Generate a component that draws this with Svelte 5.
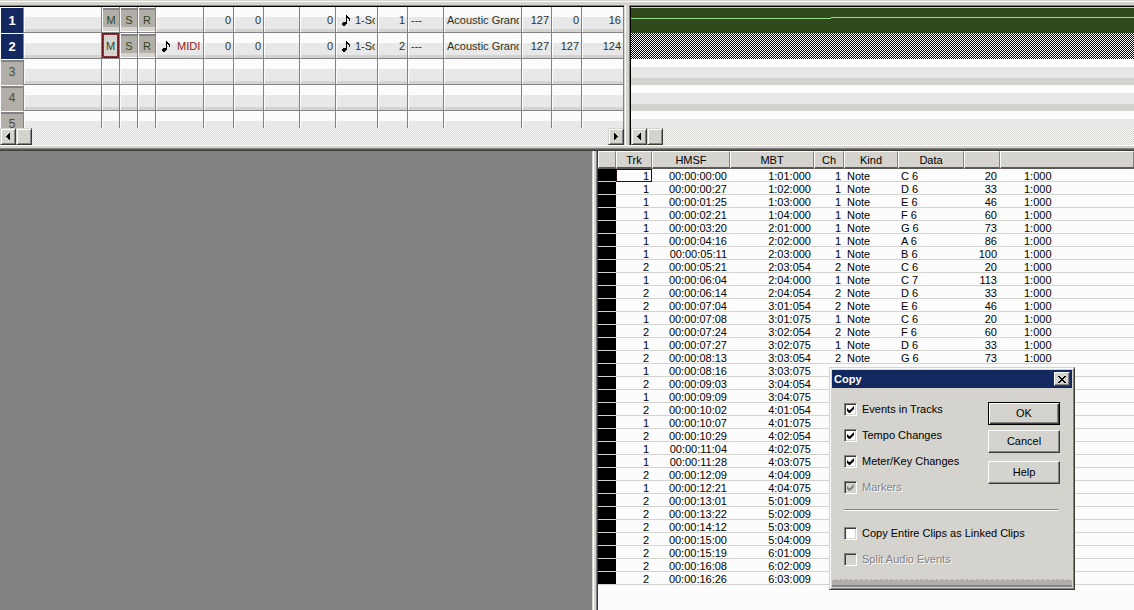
<script>
  const tracks = [
    { no: 1, kind: '', port: '1-Sound', ch: 1, bank: '---', patch: 'Acoustic Grand', vol: 127, pan: 0, size: 16 },
    { no: 2, kind: 'MIDI', port: '1-Sound', ch: 2, bank: '---', patch: 'Acoustic Grand', vol: 127, pan: 127, size: 124 },
    { no: 3 },
    { no: 4 },
    { no: 5 }
  ];

  const trackCols = [24, 78, 18, 18, 18, 48, 30, 30, 36, 36, 42, 30, 36, 78, 30, 30, 42];

  const headers = [
    { name: '', width: 18 },
    { name: 'Trk', width: 36 },
    { name: 'HMSF', width: 78 },
    { name: 'MBT', width: 84 },
    { name: 'Ch', width: 30 },
    { name: 'Kind', width: 54 },
    { name: 'Data', width: 66 },
    { name: '', width: 36 },
    { name: '' }
  ];

  // track, time, position, pitch, velocity
  const events = [
    [1, '00:00:00:00', '1:01:000', 'C 6', 20],
    [1, '00:00:00:27', '1:02:000', 'D 6', 33],
    [1, '00:00:01:25', '1:03:000', 'E 6', 46],
    [1, '00:00:02:21', '1:04:000', 'F 6', 60],
    [1, '00:00:03:20', '2:01:000', 'G 6', 73],
    [1, '00:00:04:16', '2:02:000', 'A 6', 86],
    [1, '00:00:05:11', '2:03:000', 'B 6', 100],
    [2, '00:00:05:21', '2:03:054', 'C 6', 20],
    [1, '00:00:06:04', '2:04:000', 'C 7', 113],
    [2, '00:00:06:14', '2:04:054', 'D 6', 33],
    [2, '00:00:07:04', '3:01:054', 'E 6', 46],
    [1, '00:00:07:08', '3:01:075', 'C 6', 20],
    [2, '00:00:07:24', '3:02:054', 'F 6', 60],
    [1, '00:00:07:27', '3:02:075', 'D 6', 33],
    [2, '00:00:08:13', '3:03:054', 'G 6', 73],
    [1, '00:00:08:16', '3:03:075', 'E 6', 46],
    [2, '00:00:09:03', '3:04:054', 'A 6', 86],
    [1, '00:00:09:09', '3:04:075', 'F 6', 60],
    [2, '00:00:10:02', '4:01:054', 'B 6', 100],
    [1, '00:00:10:07', '4:01:075', 'G 6', 73],
    [2, '00:00:10:29', '4:02:054', 'C 7', 113],
    [1, '00:00:11:04', '4:02:075', 'A 6', 86],
    [1, '00:00:11:28', '4:03:075', 'B 6', 100],
    [2, '00:00:12:09', '4:04:009', 'C 6', 20],
    [1, '00:00:12:21', '4:04:075', 'C 7', 113],
    [2, '00:00:13:01', '5:01:009', 'D 6', 33],
    [2, '00:00:13:22', '5:02:009', 'E 6', 46],
    [2, '00:00:14:12', '5:03:009', 'F 6', 60],
    [2, '00:00:15:00', '5:04:009', 'G 6', 73],
    [2, '00:00:15:19', '6:01:009', 'A 6', 86],
    [2, '00:00:16:08', '6:02:009', 'B 6', 100],
    [2, '00:00:16:26', '6:03:009', 'C 7', 113]
  ];

  let options = $state([
    { label: 'Events in Tracks', checked: true },
    { label: 'Tempo Changes', checked: true },
    { label: 'Meter/Key Changes', checked: true },
    { label: 'Markers', checked: true, disabled: true }
  ]);

  let clipOptions = $state([
    { label: 'Copy Entire Clips as Linked Clips', checked: false },
    { label: 'Split Audio Events', checked: false, disabled: true }
  ]);

  let open = $state(true);
  const close = () => (open = false);
</script>

{#snippet note()}
  <svg class="note" width="9" height="11" viewBox="0 0 9 11" shape-rendering="crispEdges" aria-hidden="true">
    <path d="M4 0h1v1h1v1h1v1h1v3h-1v-2h-1v-1h-1v6h-1v1h-1v1h-2v-1h-1v-2h1v-1h3z" />
  </svg>
{/snippet}

{#snippet arrow(dir)}
  <button type="button" class="scroll-btn" aria-label="Scroll {dir}">
    <svg width="4" height="7" viewBox="0 0 4 7" shape-rendering="crispEdges" aria-hidden="true">
      <path d={dir === 'left' ? 'M3 0h1v7h-1v-1h-1v-1h-1v-1h-1v-1h1v-1h1v-1h1z' : 'M0 0h1v1h1v1h1v1h1v1h-1v1h-1v1h-1v1h-1z'} />
    </svg>
  </button>
{/snippet}

{#snippet checkbox(opt)}
  <label class="check" class:disabled={opt.disabled}>
    <input type="checkbox" bind:checked={opt.checked} disabled={opt.disabled} />
    {opt.label}
  </label>
{/snippet}

<div class="window">
  <div class="topbar"></div>

  <div class="upper">
    <section class="tracks">
      <div class="viewport">
        <table class="track-table">
          <colgroup>
            {#each trackCols as w}
              <col style="width: {w}px" />
            {/each}
          </colgroup>
          <tbody>
            {#each tracks as t}
              <tr>
                <th class:selected={t.no <= 2}>{t.no}</th>
                <td></td>
                {#each ['M', 'S', 'R'] as b}
                  <td class="tool">
                    {#if t.patch}
                      <button type="button" class:focused={t.no === 2 && b === 'M'}>{b}</button>
                    {/if}
                  </td>
                {/each}
                <td>
                  {#if t.kind}
                    <div class="source">{@render note()}<span>{t.kind}</span></div>
                  {/if}
                </td>
                <td class="num">{t.patch ? 0 : ''}</td>
                <td class="num">{t.patch ? 0 : ''}</td>
                <td></td>
                <td class="num">{t.patch ? 0 : ''}</td>
                <td>
                  {#if t.port}
                    <div class="port">{@render note()}<span>{t.port}</span></div>
                  {/if}
                </td>
                <td class="num">{t.ch ?? ''}</td>
                <td class="text">{t.bank ?? ''}</td>
                <td class="text"><div class="clip">{t.patch ?? ''}</div></td>
                <td class="num">{t.vol ?? ''}</td>
                <td class="num">{t.pan ?? ''}</td>
                <td class="num">{t.size ?? ''}</td>
              </tr>
            {/each}
          </tbody>
        </table>
      </div>
      <div class="scrollbar">
        {@render arrow('left')}
        <div class="thumb"></div>
        <div class="space"></div>
        {@render arrow('right')}
      </div>
    </section>

    <div class="splitter"></div>

    <section class="clips">
      <div class="viewport">
        <div class="clip-row green">
          <svg width="100%" height="24" shape-rendering="crispEdges" aria-hidden="true">
            <rect x="0" y="10" width="200" height="1" />
            <rect x="200" y="9" width="100%" height="1" />
          </svg>
        </div>
        <div class="clip-row dither"></div>
        <div class="clip-row"></div>
        <div class="clip-row"></div>
        <div class="clip-row"></div>
      </div>
      <div class="scrollbar">
        {@render arrow('left')}
        <div class="thumb"></div>
      </div>
    </section>
  </div>

  <div class="divider"></div>

  <div class="lower">
    <div class="workspace"></div>
    <section class="events">
      <table class="event-table">
        <colgroup>
          {#each headers as h}
            {#if h.width}
              <col style="width: {h.width}px" />
            {:else}
              <col />
            {/if}
          {/each}
        </colgroup>
        <thead>
          <tr>
            {#each headers as h}
              <th>{h.name}</th>
            {/each}
          </tr>
        </thead>
        <tbody>
          {#each events as [trk, hmsf, mbt, pitch, vel], i}
            <tr>
              <td class="marker"></td>
              <td class="num" class:cursor={i === 0}>{trk}</td>
              <td class="num">{hmsf}</td>
              <td class="num">{mbt}</td>
              <td class="num">{trk}</td>
              <td>Note</td>
              <td>{pitch}</td>
              <td class="num">{vel}</td>
              <td class="duration">1:000</td>
            </tr>
          {/each}
        </tbody>
      </table>
    </section>
  </div>

  {#if open}
    <div class="dialog" role="dialog" aria-labelledby="dialog-title">
      <div class="titlebar">
        <span id="dialog-title">Copy</span>
        <button type="button" class="close" aria-label="Close" onclick={close}>
          <svg width="8" height="7" viewBox="0 0 8 7" shape-rendering="crispEdges" aria-hidden="true">
            <path d="M0 0h2v1h1v1h2v-1h1v-1h2v1h-1v1h-1v1h-1v1h1v1h1v1h1v1h-2v-1h-1v-1h-2v1h-1v1h-2v-1h1v-1h1v-1h1v-1h-1v-1h-1v-1h-1z" />
          </svg>
        </button>
      </div>
      <div class="dialog-body">
        <div class="options">
          {#each options as opt}
            {@render checkbox(opt)}
          {/each}
        </div>
        <div class="actions">
          <button type="button" class="default" onclick={close}>OK</button>
          <button type="button" onclick={close}>Cancel</button>
          <button type="button" class="help">Help</button>
        </div>
      </div>
      <hr />
      <div class="options clip-options">
        {#each clipOptions as opt}
          {@render checkbox(opt)}
        {/each}
      </div>
      <div class="grip"></div>
    </div>
  {/if}
</div>

<style>
  :global(body) {
    margin: 0;
    overflow: hidden;
  }

  .window {
    --face: #d4d3ce;
    --light: #fcfcfc;
    --shadow: #848284;
    --dark: #3c3c34;
    --navy: #12285f;
    --tool: #b1afa7;
    display: flex;
    flex-direction: column;
    height: 100vh;
    position: relative;
    background: var(--face);
    color: #000;
    font: 11px/13px 'Liberation Sans', Arial, sans-serif;
  }

  button {
    font: inherit;
    color: inherit;
    padding: 0;
    margin: 0;
    box-sizing: border-box;
  }

  table {
    border-collapse: separate;
    border-spacing: 0;
    table-layout: fixed;
  }

  th,
  td {
    padding: 0;
    box-sizing: border-box;
    white-space: nowrap;
    overflow: hidden;
  }

  .topbar {
    height: 5px;
    flex: none;
    background: linear-gradient(var(--face) 1px, var(--light) 1px 2px, var(--face) 2px);
  }

  .upper {
    display: flex;
    flex: none;
  }

  .tracks,
  .clips {
    border-top: 1px solid var(--shadow);
    box-shadow: inset 0 1px #000;
    padding-top: 1px;
    box-sizing: border-box;
  }

  .tracks {
    width: 624px;
    flex: none;
  }

  .clips {
    flex: 1;
    min-width: 0;
    border-left: 1px solid var(--shadow);
    box-shadow: inset 1px 1px #000;
    padding-left: 1px;
  }

  .splitter {
    width: 5px;
    flex: none;
    background: linear-gradient(90deg, var(--face) 1px, var(--light) 1px 2px, var(--face) 2px);
  }

  .viewport {
    height: 121px;
    overflow: hidden;
  }

  .track-table {
    width: 624px;
    color: #2c3424;
  }

  .track-table tr {
    height: 26px;
  }

  .track-table td {
    height: 26px;
    padding-top: 2px;
    border-right: 1px solid var(--shadow);
    border-bottom: 1px solid var(--shadow);
    box-shadow: inset 1px 0 var(--light);
    background: linear-gradient(var(--light) 10px, #e8e8e8 10px 22px, var(--face) 22px);
  }

  .track-table th {
    height: 26px;
    border-top: 1px solid var(--light);
    border-left: 1px solid var(--light);
    border-right: 1px solid var(--shadow);
    background: linear-gradient(var(--shadow) 2px, var(--tool) 2px);
    font-weight: normal;
    font-size: 12px;
    color: #4c4c48;
  }

  .track-table th.selected {
    background: var(--navy);
    color: #fff;
    font-weight: bold;
    font-size: 13px;
  }

  .track-table .num {
    text-align: right;
    padding-right: 2px;
  }

  .track-table .text {
    padding-left: 3px;
  }

  .clip {
    overflow: hidden;
    margin-right: 2px;
  }

  .track-table .tool {
    padding: 0;
  }

  .tool button {
    display: block;
    width: 100%;
    height: 25px;
    padding-top: 2px;
    border: 0;
    border-left: 1px solid var(--light);
    border-bottom: 1px solid var(--light);
    background: linear-gradient(var(--light) 1px, var(--shadow) 1px 3px, var(--tool) 3px 20px, var(--face) 20px);
    color: #344424;
  }

  .tool button.focused {
    border: 2px solid #8c343c;
    outline: 1px dotted #1c0c0c;
    outline-offset: -1px;
    background: var(--face);
  }

  .source,
  .port {
    display: flex;
    align-items: center;
    padding-left: 6px;
    overflow: hidden;
  }

  .source {
    gap: 6px;
    color: #8c2424;
  }

  .port {
    gap: 4px;
    margin-right: 2px;
  }

  .note {
    flex: none;
    fill: #000;
  }

  .scrollbar {
    display: flex;
    height: 17px;
    background: repeating-conic-gradient(var(--face) 0 25%, var(--light) 0 50%) 0 0 / 2px 2px;
  }

  .scroll-btn,
  .thumb {
    width: 16px;
    height: 17px;
    flex: none;
    box-sizing: border-box;
    border: 1px solid;
    border-color: var(--face) var(--dark) var(--dark) var(--face);
    box-shadow: inset 1px 1px var(--light), inset -1px -1px var(--shadow);
    background: var(--face);
  }

  .scroll-btn {
    display: flex;
    align-items: center;
    justify-content: center;
  }

  .space {
    flex: 1;
  }

  .clip-row {
    height: 26px;
    background: linear-gradient(var(--light) 8px, #e8e8e8 8px 19px, var(--face) 19px);
  }

  .clip-row.green {
    box-sizing: border-box;
    border-top: 1px solid var(--face);
    background: #304a1c;
  }

  .green svg {
    display: block;
    fill: #94dc8c;
  }

  .clip-row.dither {
    background: repeating-conic-gradient(#000 0 25%, var(--light) 0 50%) 0 0 / 2px 2px;
  }

  .divider {
    height: 6px;
    flex: none;
    background: linear-gradient(var(--light) 1px, var(--face) 1px 3px, var(--shadow) 3px 4px, #5c5954 4px 5px, var(--dark) 5px);
  }

  .lower {
    display: grid;
    grid-template-columns: 592fr 542fr;
    flex: 1;
    min-height: 0;
  }

  .workspace {
    background: #848284;
  }

  .events {
    min-width: 0;
    overflow: hidden;
    padding-left: 6px;
    background: linear-gradient(
      90deg,
      var(--face) 1px,
      #fff 1px 2px,
      var(--face) 2px 4px,
      var(--shadow) 4px 5px,
      var(--dark) 5px 6px,
      var(--light) 6px
    );
  }

  .event-table {
    width: 100%;
  }

  .event-table th {
    height: 18px;
    padding-top: 2px;
    border-top: 1px solid var(--light);
    border-left: 1px solid var(--light);
    border-right: 1px solid var(--shadow);
    border-bottom: 2px solid #5c5954;
    background: var(--face);
    font-weight: normal;
  }

  .event-table td {
    height: 13px;
    line-height: 10px;
    border-bottom: 1px solid var(--face);
    padding: 2px 0 0 3px;
  }

  .event-table .num {
    text-align: right;
    padding: 2px 3px 0 0;
  }

  .event-table .marker {
    background: #000;
  }

  .event-table .cursor {
    outline: 1px solid #2c0c0c;
    outline-offset: -1px;
  }

  .event-table .duration {
    padding-left: 24px;
  }

  .dialog {
    position: absolute;
    left: 829px;
    top: 367px;
    width: 246px;
    box-sizing: border-box;
    padding: 2px;
    border: 1px solid;
    border-color: var(--face) var(--dark) var(--dark) var(--face);
    box-shadow: inset 1px 1px var(--light), inset -1px -1px var(--shadow);
    background: var(--face);
  }

  .titlebar {
    display: flex;
    align-items: center;
    justify-content: space-between;
    height: 18px;
    padding: 0 2px;
    background: var(--navy);
    color: #fff;
    font-weight: bold;
  }

  .close {
    display: flex;
    align-items: center;
    justify-content: center;
    width: 16px;
    height: 14px;
  }

  .close,
  .actions button {
    border: 1px solid;
    border-color: var(--light) var(--dark) var(--dark) var(--light);
    box-shadow: inset -1px -1px var(--shadow);
    background: var(--face);
  }

  .dialog-body {
    display: flex;
    justify-content: space-between;
    padding: 14px 12px 0;
  }

  .options {
    display: flex;
    flex-direction: column;
    gap: 13px;
    padding-top: 1px;
  }

  .check {
    display: flex;
    align-items: center;
    gap: 5px;
    height: 13px;
    line-height: 15px;
  }

  .check.disabled {
    color: var(--shadow);
    text-shadow: 1px 1px var(--light);
  }

  .check input {
    appearance: none;
    width: 13px;
    height: 13px;
    flex: none;
    margin: 0;
    padding: 2px;
    box-sizing: border-box;
    border: 1px solid;
    border-color: var(--shadow) var(--light) var(--light) var(--shadow);
    box-shadow: inset 1px 1px var(--dark), inset -1px -1px var(--face);
    background: var(--light);
  }

  .check input:disabled {
    background: var(--face);
  }

  .check input:checked::before {
    content: '';
    display: block;
    width: 7px;
    height: 7px;
    background: #000;
    clip-path: polygon(0 2px, 2px 4px, 3px 4px, 7px 0, 7px 3px, 3px 7px, 2px 7px, 0 5px);
  }

  .check input:checked:disabled::before {
    background: var(--shadow);
  }

  .actions {
    display: flex;
    flex-direction: column;
    gap: 5px;
  }

  .actions button {
    width: 72px;
    height: 23px;
  }

  .actions .default {
    border-color: #000;
    box-shadow: inset 1px 1px var(--light), inset -1px -1px var(--dark), inset -2px -2px var(--shadow);
  }

  .actions .help {
    margin-top: 3px;
  }

  hr {
    height: 0;
    margin: 15px 14px 0 12px;
    border: 0;
    border-top: 1px solid var(--shadow);
    border-bottom: 1px solid var(--light);
  }

  .clip-options {
    padding: 16px 12px 0;
  }

  .grip {
    height: 8px;
    margin-top: 13px;
    box-sizing: border-box;
    border-top: 1px dashed var(--face);
    border-bottom: 2px solid var(--shadow);
    background: var(--tool);
  }
</style>
